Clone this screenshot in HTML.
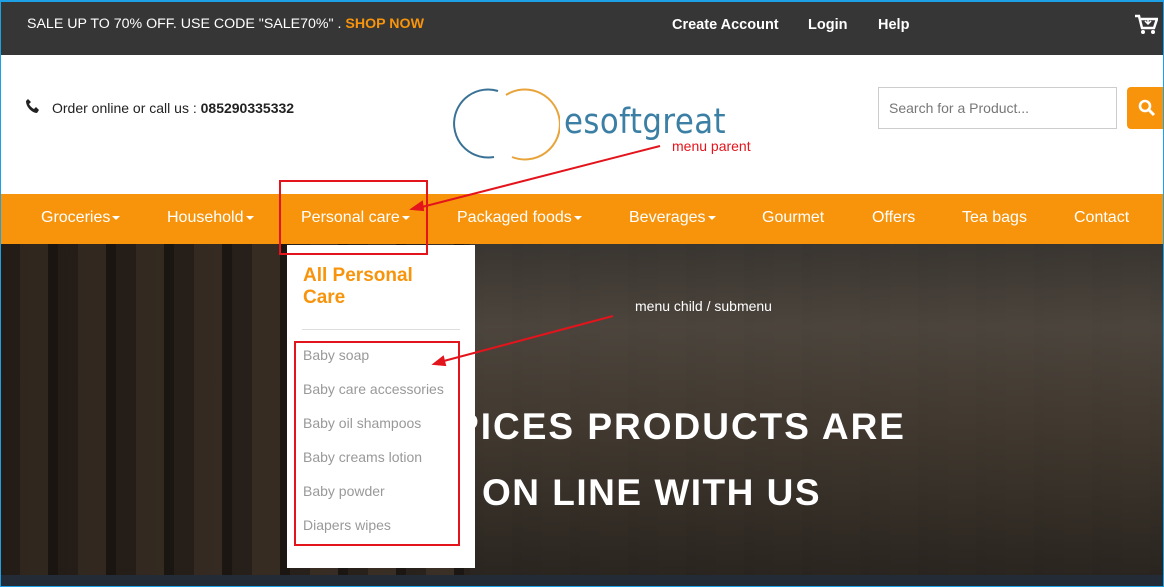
<!DOCTYPE html>
<html><head><meta charset="utf-8"><style>
*{margin:0;padding:0;box-sizing:border-box}
body{width:1164px;height:587px;overflow:hidden;font-family:"Liberation Sans",sans-serif;background:#fff;position:relative}
.top{position:absolute;left:0;top:0;width:1164px;height:55px;background:#363636;border-top:2px solid #1ea0e6}
.top .sale{position:absolute;left:27px;top:14px;color:#fff;font-size:14.2px}
.top .sale b{color:#f7940b}
.top a{position:absolute;top:15px;color:#fff;font-weight:bold;font-size:14.5px}
.hdr{position:absolute;left:0;top:55px;width:1164px;height:139px;background:#fff}
.nav{position:absolute;left:0;top:194px;width:1164px;height:50px;background:#f7940b}
.nav span{position:absolute;top:15px;color:#fff;font-size:16px}
.car{display:inline-block;width:0;height:0;border-left:4px solid transparent;border-right:4px solid transparent;border-top:4px solid #fff;vertical-align:middle;margin-left:2px}
.hero{position:absolute;left:0;top:244px;width:1164px;height:331px;background:
linear-gradient(90deg,rgba(20,15,10,.3),rgba(0,0,0,0) 40%,rgba(0,0,0,.2)),
repeating-linear-gradient(90deg,#2a221c 0 20px,#3b3026 20px 48px,#1c1713 48px 58px),
#2e2720}
.hero2{position:absolute;left:470px;top:244px;width:694px;height:331px;background:
linear-gradient(180deg,#3a3631 0,#4d463e 25%,#423a30 55%,#2a2520 100%);opacity:.95}
.hero h1{position:absolute;color:#fff;font-size:37px;font-weight:bold;letter-spacing:2px;white-space:nowrap}
.bot{position:absolute;left:0;top:575px;width:1164px;height:12px;background:#232b36}
.dd{position:absolute;left:287px;top:245px;width:188px;height:323px;background:#fff}
.dd .t{position:absolute;left:16px;top:20px;color:#f7940b;font-weight:bold;font-size:19px;line-height:22px}
.dd hr{position:absolute;left:15px;top:84px;width:158px;border:0;border-top:1px solid #ddd}
.dd .i{position:absolute;left:16px;color:#999;font-size:14px}
.red{position:absolute;border:2px solid #e3141b}
</style></head><body>
<div class="top">
<div class="sale">SALE UP TO 70% OFF. USE CODE "SALE70%" . <b>SHOP NOW</b></div>
<a style="left:672px">Create Account</a><a style="left:808px">Login</a><a style="left:878px">Help</a>
<svg style="position:absolute;left:1134px;top:12px" width="24" height="22" viewBox="0 0 24 22"><path d="M1 2h4l3 12h12l3-9H7" fill="none" stroke="#fff" stroke-width="2.5"/><circle cx="9" cy="18" r="2" fill="#fff"/><circle cx="19" cy="18" r="2" fill="#fff"/><path d="M14 4v6M11 7l3 3 3-3" stroke="#fff" stroke-width="1.5" fill="none"/></svg>
</div>
<div class="hdr">
<svg style="position:absolute;left:25px;top:43px" width="16" height="16" viewBox="0 0 16 16"><path d="M3 1l3 3-2 2c1 2 3 4 5 5l2-2 3 3-2 3C7 15 1 9 1 3z" fill="#222"/></svg>
<div style="position:absolute;left:52px;top:45px;font-size:14px;color:#222">Order online or call us : <b>085290335332</b></div>
<svg style="position:absolute;left:450px;top:32px" width="110" height="75"><path d="M48 4 A34 34 0 1 0 44 70" fill="none" stroke="#3a7295" stroke-width="2"/><path d="M56 8 A35 35 0 1 1 62 70" fill="none" stroke="#e8a43a" stroke-width="2"/></svg>
<div style="position:absolute;left:564px;top:47px;font-size:35px;color:#3c7fa5;letter-spacing:.5px;font-family:'DejaVu Sans','Liberation Sans',sans-serif;transform:scaleX(.88);transform-origin:left">esoftgreat</div>
<div style="position:absolute;left:672px;top:83px;font-size:14px;color:#e3141b">menu parent</div>
<div style="position:absolute;left:878px;top:32px;width:239px;height:42px;border:1px solid #ccc;color:#777;font-size:14px;padding:12px 10px">Search for a Product...</div>
<div style="position:absolute;left:1127px;top:32px;width:40px;height:42px;background:#f7940b;border-radius:4px"><svg style="position:absolute;left:11px;top:12px" width="18" height="18"><circle cx="7" cy="7" r="5" fill="none" stroke="#fff" stroke-width="2.6"/><path d="M11 11l5 5" stroke="#fff" stroke-width="3"/></svg></div>
</div>
<div class="nav">
<span style="left:41px">Groceries<i class="car"></i></span>
<span style="left:167px">Household<i class="car"></i></span>
<span style="left:301px">Personal care<i class="car"></i></span>
<span style="left:457px">Packaged foods<i class="car"></i></span>
<span style="left:629px">Beverages<i class="car"></i></span>
<span style="left:762px">Gourmet</span>
<span style="left:872px">Offers</span>
<span style="left:962px">Tea bags</span>
<span style="left:1074px">Contact</span>
</div>
<div class="hero"></div><div class="hero2"></div>
<div class="hero" style="background:none">
<h1 style="right:258px;top:162px">WE SPICES PRODUCTS ARE</h1>
<h1 style="left:482px;top:228px;letter-spacing:1.5px">ON LINE WITH US</h1>
<div style="position:absolute;left:635px;top:54px;color:#fff;font-size:14px">menu child / submenu</div>
</div>
<div class="bot"></div>
<div class="dd">
<div class="t">All Personal<br>Care</div><hr>
<div class="i" style="top:102px">Baby soap</div>
<div class="i" style="top:136px">Baby care accessories</div>
<div class="i" style="top:170px">Baby oil shampoos</div>
<div class="i" style="top:204px">Baby creams lotion</div>
<div class="i" style="top:238px">Baby powder</div>
<div class="i" style="top:272px">Diapers wipes</div>
</div>
<div class="red" style="left:279px;top:180px;width:149px;height:75px"></div>
<div class="red" style="left:294px;top:341px;width:166px;height:205px"></div>
<svg style="position:absolute;left:0;top:0" width="1164" height="587"><g stroke="#e3141b" stroke-width="2" fill="#e3141b"><line x1="660" y1="146" x2="418" y2="208"/><path d="M412 209l10-7 1 8z"/><line x1="613" y1="316" x2="440" y2="362"/><path d="M434 364l9-7 2 8z"/></g></svg>
<div style="position:absolute;left:0;top:0;width:1164px;height:587px;border:1px solid #1ea0e6;border-top:2px solid #1ea0e6"></div>
</body></html>
